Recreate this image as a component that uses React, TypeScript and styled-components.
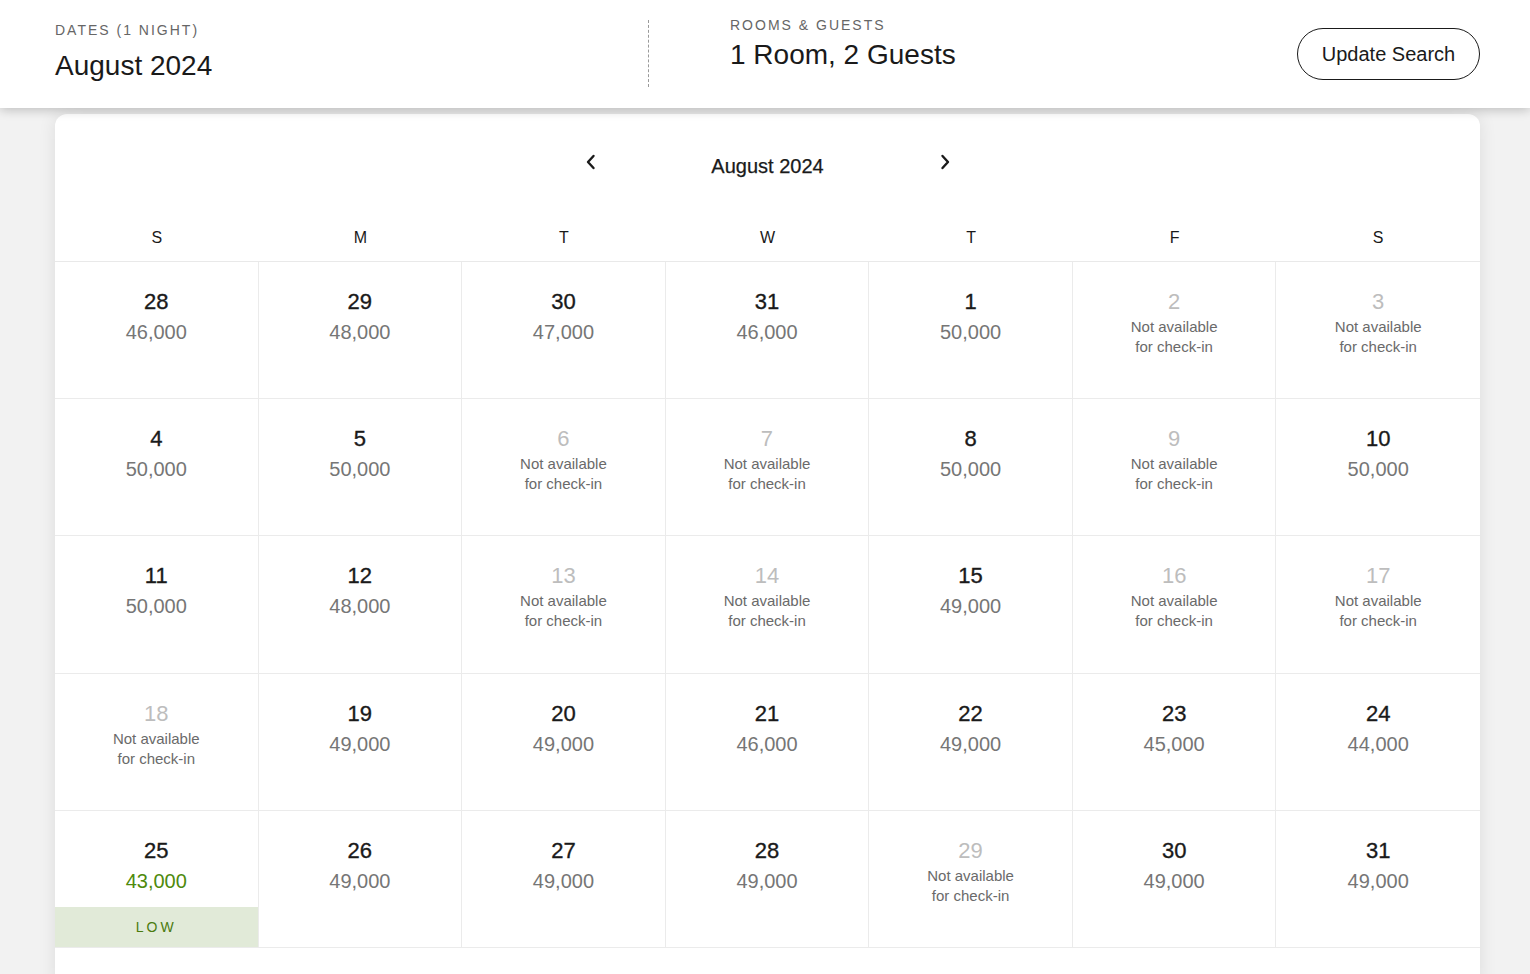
import React from "react";
import styled, { createGlobalStyle } from "styled-components";

const GlobalStyle = createGlobalStyle`
  html, body {
    margin: 0;
    padding: 0;
    background: #f2f2f2;
    font-family: "Liberation Sans", Arial, Helvetica, sans-serif;
    color: #1a1a1a;
  }
  * { box-sizing: border-box; }
`;

const Page = styled.div`
  min-height: 100vh;
  display: flex;
  flex-direction: column;
`;

const Header = styled.header`
  position: relative;
  z-index: 2;
  height: 108px;
  background: #fff;
  box-shadow: 0 2px 10px rgba(0, 0, 0, 0.22);
  display: flex;
  align-items: flex-start;
  padding: 0 50px 0 55px;
`;

const Section = styled.div<{ $top: number; $gap: number; $width?: number }>`
  display: flex;
  flex-direction: column;
  padding-top: ${(p) => p.$top}px;
  gap: ${(p) => p.$gap}px;
  width: ${(p) => (p.$width ? `${p.$width}px` : "auto")};
`;

const Label = styled.div`
  font-size: 14px;
  line-height: 16px;
  letter-spacing: 2px;
  color: #666;
  text-transform: uppercase;
`;

const Value = styled.div`
  font-size: 28px;
  line-height: 32px;
  color: #1a1a1a;
`;

const Divider = styled.div`
  margin-top: 20px;
  height: 67px;
  border-left: 1px dashed #9a9a9a;
  margin-right: 81px;
`;

const UpdateButton = styled.button`
  margin-left: auto;
  margin-top: 28px;
  height: 52px;
  width: 183px;
  border: 1px solid #1a1a1a;
  border-radius: 26px;
  background: #fff;
  font-family: inherit;
  font-size: 20px;
  color: #1a1a1a;
  cursor: pointer;
`;

const Card = styled.main`
  flex: 1;
  margin: 6px 50px 0 55px;
  background: #fff;
  border-radius: 12px 12px 0 0;
  box-shadow: 0 0 18px rgba(0, 0, 0, 0.09);
  padding-bottom: 40px;
`;

const Nav = styled.div`
  display: flex;
  justify-content: center;
  align-items: flex-start;
  padding-top: 40px;
`;

const NavButton = styled.button`
  width: 24px;
  height: 16px;
  padding: 0;
  border: none;
  background: none;
  display: flex;
  align-items: center;
  justify-content: center;
  cursor: pointer;
  color: #1a1a1a;
`;

const MonthTitle = styled.div`
  width: 330px;
  text-align: center;
  font-size: 20px;
  line-height: 24px;
  color: #1a1a1a;
  -webkit-text-stroke: 0.25px #1a1a1a;
`;

const WeekRow = styled.div`
  display: grid;
  grid-template-columns: repeat(7, 1fr);
  margin-top: 50px;
  padding-bottom: 13px;
  border-bottom: 1px solid #e9e9e9;
`;

const WeekDay = styled.div`
  text-align: center;
  font-size: 16px;
  line-height: 20px;
  color: #1a1a1a;
`;

const Grid = styled.div`
  display: grid;
  grid-template-columns: repeat(7, 1fr);
  grid-auto-rows: 137.2px;
`;

const Cell = styled.div<{ $last: boolean }>`
  display: flex;
  flex-direction: column;
  align-items: center;
  padding-top: 27px;
  border-bottom: 1px solid #ebebeb;
  border-right: ${(p) => (p.$last ? "none" : "1px solid #ebebeb")};
`;

const DayNum = styled.div<{ $disabled: boolean }>`
  font-size: 22px;
  line-height: 26px;
  color: ${(p) => (p.$disabled ? "#bdbdbd" : "#1a1a1a")};
  -webkit-text-stroke: ${(p) => (p.$disabled ? "0" : "0.35px #1a1a1a")};
`;

const Price = styled.div<{ $low: boolean }>`
  margin-top: 5px;
  font-size: 20px;
  line-height: 24px;
  color: ${(p) => (p.$low ? "#4e8a0c" : "#767676")};
`;

const Unavailable = styled.div`
  margin-top: 2px;
  font-size: 15px;
  line-height: 20px;
  color: #6a6a6a;
  text-align: center;
`;

const LowTag = styled.div`
  margin-top: auto;
  align-self: stretch;
  height: 40px;
  background: #e1ead8;
  color: #4a7b0e;
  font-size: 14px;
  letter-spacing: 3px;
  display: flex;
  align-items: center;
  justify-content: center;
`;

type Day = { d: number; p?: string; low?: boolean };

const NA = (d: number): Day => ({ d });

const weeks: Day[][] = [
  [
    { d: 28, p: "46,000" },
    { d: 29, p: "48,000" },
    { d: 30, p: "47,000" },
    { d: 31, p: "46,000" },
    { d: 1, p: "50,000" },
    NA(2),
    NA(3),
  ],
  [
    { d: 4, p: "50,000" },
    { d: 5, p: "50,000" },
    NA(6),
    NA(7),
    { d: 8, p: "50,000" },
    NA(9),
    { d: 10, p: "50,000" },
  ],
  [
    { d: 11, p: "50,000" },
    { d: 12, p: "48,000" },
    NA(13),
    NA(14),
    { d: 15, p: "49,000" },
    NA(16),
    NA(17),
  ],
  [
    NA(18),
    { d: 19, p: "49,000" },
    { d: 20, p: "49,000" },
    { d: 21, p: "46,000" },
    { d: 22, p: "49,000" },
    { d: 23, p: "45,000" },
    { d: 24, p: "44,000" },
  ],
  [
    { d: 25, p: "43,000", low: true },
    { d: 26, p: "49,000" },
    { d: 27, p: "49,000" },
    { d: 28, p: "49,000" },
    NA(29),
    { d: 30, p: "49,000" },
    { d: 31, p: "49,000" },
  ],
];

const days = ["S", "M", "T", "W", "T", "F", "S"];

const Chevron = ({ dir }: { dir: "left" | "right" }) => (
  <svg width="10" height="16" viewBox="0 0 10 16" fill="none">
    <path
      d={dir === "left" ? "M7.5 2 L2 8 L7.5 14" : "M2.5 2 L8 8 L2.5 14"}
      stroke="currentColor"
      strokeWidth="2.4"
      strokeLinecap="round"
      strokeLinejoin="round"
    />
  </svg>
);

export default function App() {
  return (
    <Page>
      <GlobalStyle />
      <Header>
        <Section $top={22} $gap={12} $width={593}>
          <Label>Dates (1 Night)</Label>
          <Value>August 2024</Value>
        </Section>
        <Divider />
        <Section $top={17} $gap={6}>
          <Label>Rooms &amp; Guests</Label>
          <Value>1 Room, 2 Guests</Value>
        </Section>
        <UpdateButton>Update Search</UpdateButton>
      </Header>
      <Card>
        <Nav>
          <NavButton aria-label="Previous month">
            <Chevron dir="left" />
          </NavButton>
          <MonthTitle>August 2024</MonthTitle>
          <NavButton aria-label="Next month">
            <Chevron dir="right" />
          </NavButton>
        </Nav>
        <WeekRow>
          {days.map((d, i) => (
            <WeekDay key={i}>{d}</WeekDay>
          ))}
        </WeekRow>
        <Grid>
          {weeks.flatMap((week, wi) =>
            week.map((day, di) => (
              <Cell key={`${wi}-${di}`} $last={di === 6}>
                <DayNum $disabled={!day.p}>{day.d}</DayNum>
                {day.p ? (
                  <Price $low={!!day.low}>{day.p}</Price>
                ) : (
                  <Unavailable>
                    Not available
                    <br />
                    for check-in
                  </Unavailable>
                )}
                {day.low && <LowTag>LOW</LowTag>}
              </Cell>
            ))
          )}
        </Grid>
      </Card>
    </Page>
  );
}
